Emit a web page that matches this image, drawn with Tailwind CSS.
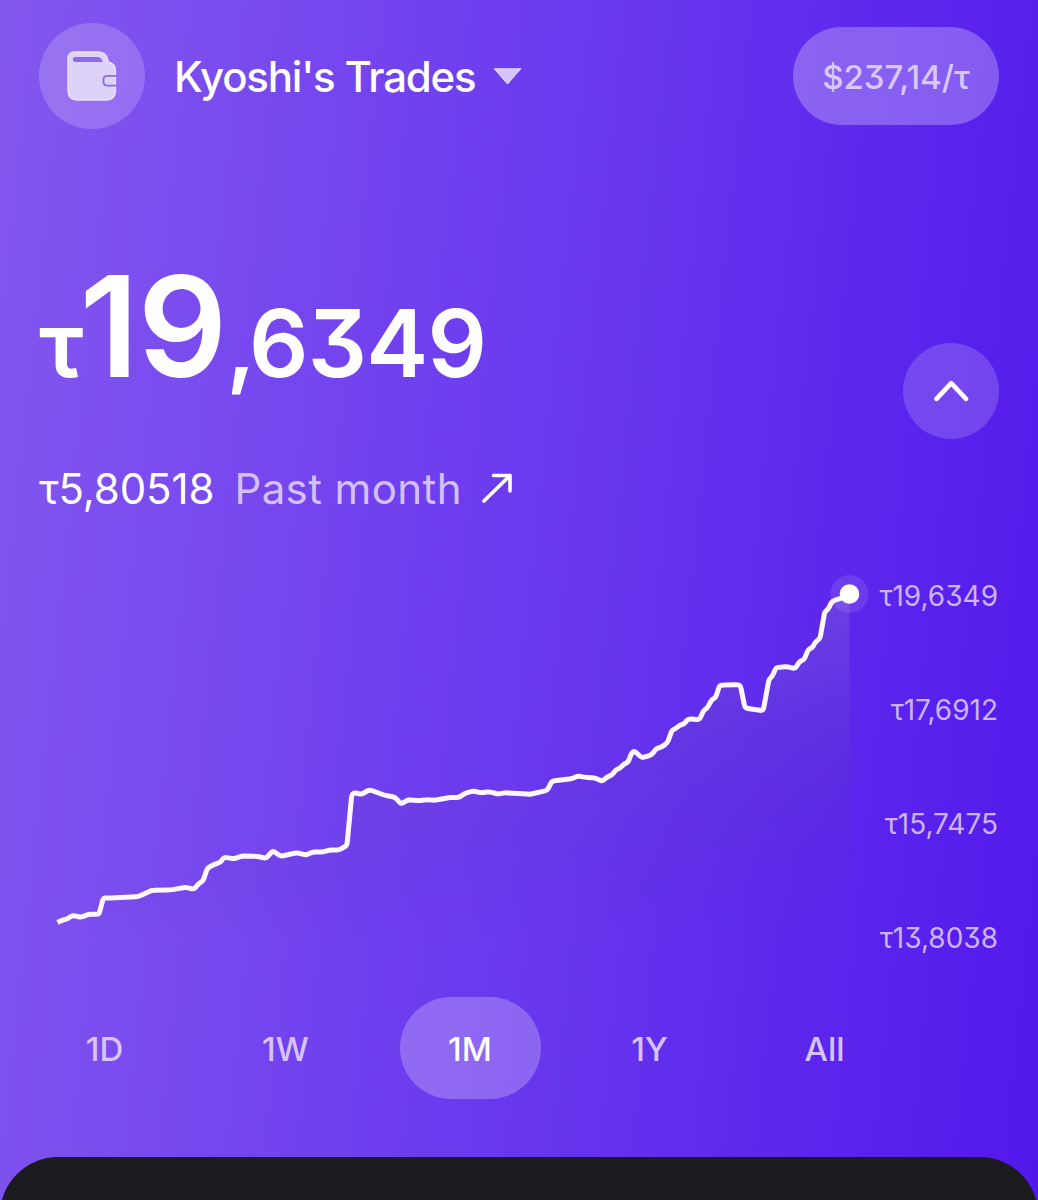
<!DOCTYPE html>
<html lang="en">
<head>
    <meta charset="UTF-8">
    <meta name="viewport" content="width=device-width, initial-scale=1.0">
    <title>Kyoshi's Trades</title>
    <script src="https://cdn.jsdelivr.net/npm/@tailwindcss/browser@4"></script>
</head>
<body class="font-['Inter',sans-serif] [font-feature-settings:'cv09'] text-white">
    <div class="flex h-[1200px] w-[1038px] flex-col overflow-hidden bg-[linear-gradient(96deg,#8457ee_0%,#6a38ee_52%,#5218eb_100%)]">

        <!-- Header -->
        <header class="mt-[23px] flex h-[106px] shrink-0 items-center px-[39px]">
            <div class="flex size-[106px] shrink-0 items-center justify-center rounded-full bg-white/18">
                <svg class="size-[50px]" viewBox="0 0 50 50" fill="none">
                    <path d="M8 1H31Q40 1 41.3 10.8Q48.5 12.5 48.5 20V39Q48.5 49 38.5 49H11Q1 49 1 39V8Q1 1 8 1Z" fill="#ddd2f8" stroke="#ede4fd" stroke-width="1.3"/>
                    <path d="M8.3 6H30Q34.5 6 35.8 10.9H8.3A2.4 2.4 0 0 1 8.3 6Z" fill="#8e69ea"/>
                    <path d="M50 24.8H40.5Q36.5 24.8 36.5 28.3V30.8Q36.5 34.6 40.5 34.6H50" stroke="#8e69ea" stroke-width="1.8"/>
                </svg>
            </div>
            <h1 class="ml-[29px] text-[42px] font-medium tracking-[-1.2px] whitespace-nowrap">Kyoshi's Trades</h1>
            <svg class="ml-[18px] h-[17px] w-[29px]" viewBox="0 0 29 17">
                <path d="M1.2 .8H27.8L14.5 16Z" fill="#d5c4f8" stroke="#eadffd" stroke-width="1"/>
            </svg>
            <div class="ml-auto flex h-[98px] w-[206px] items-center justify-center rounded-full bg-white/26 pt-[3px] text-[33px] font-medium text-[#d9c8fd]">$237,14/τ</div>
        </header>

        <!-- Balance -->
        <section class="flex h-[390px] shrink-0 justify-between px-[39px]">
            <div class="flex flex-col">
                <div class="mt-[112px] flex h-[170px] items-baseline font-semibold leading-[170px] whitespace-nowrap">
                    <span class="text-[90px] tracking-[-4px]">τ</span>
                    <span class="text-[140px] tracking-[-1px]">19</span>
                    <span class="text-[93px] tracking-[-7px]">,</span>
                    <span class="text-[93px] tracking-[-0.7px]">6349</span>
                </div>
                <div class="mt-[53px] flex items-center text-[42px] leading-[50px] whitespace-nowrap">
                    <span class="tracking-[-0.1px]">τ5,80518</span>
                    <span class="ml-[20px] tracking-[0.4px] text-[#d4c0fc]">Past month</span>
                    <svg class="ml-[19px] size-[32px]" viewBox="0 0 32 32" fill="none" stroke="white" stroke-width="3.6" stroke-linecap="round" stroke-linejoin="round">
                        <path d="M3 28L29 2.5M12.5 2.5H29V18"/>
                    </svg>
                </div>
            </div>
            <button class="mt-[214px] flex size-[96px] items-center justify-center rounded-full bg-white/17">
                <svg class="h-[22px] w-[36px]" viewBox="0 0 36 22" fill="none" stroke="white" stroke-width="4.6" stroke-linecap="round" stroke-linejoin="round">
                    <path d="M3.5 18.8L18.2 3.2L33 18.8"/>
                </svg>
            </button>
        </section>

        <!-- Chart -->
        <section class="flex h-[440px] shrink-0 justify-between pr-[40px]">
            <svg class="h-[440px] w-[872px] shrink-0" viewBox="0 519 872 440" fill="none">
                <defs>
                    <linearGradient id="area" gradientUnits="userSpaceOnUse" x1="0" y1="594" x2="0" y2="940">
                        <stop offset="0" stop-color="#9885d1" stop-opacity=".26"/>
                        <stop offset=".4" stop-color="#6a50b8" stop-opacity=".2"/>
                        <stop offset="1" stop-color="#4a28b0" stop-opacity="0"/>
                    </linearGradient>
                </defs>
                <path id="fill" fill="url(#area)"/>
                <circle cx="849.5" cy="594" r="19" fill="white" fill-opacity=".1"/>
                <path id="line" stroke="#fdf8ff" stroke-width="5" stroke-linejoin="round"/>
                <circle cx="849.5" cy="594" r="9.8" fill="white"/>
            </svg>
            <div class="flex flex-col items-end pt-[60px] text-[28px] leading-[34px] text-[#cbb4fb]">
                <span class="h-[114px]">τ19,6349</span>
                <span class="h-[114px]">τ17,6912</span>
                <span class="h-[114px]">τ15,7475</span>
                <span>τ13,8038</span>
            </div>
        </section>

        <!-- Range tabs -->
        <nav class="mt-[38px] grid h-[102px] shrink-0 grid-cols-[181px_181px_188px_171px_179px] items-center justify-items-center pl-[14px] text-[33px] font-medium text-[#d6c4fd]">
            <span class="pt-[3px]">1D</span>
            <span class="pt-[3px]">1W</span>
            <span class="flex h-[102px] w-[141px] items-center justify-center rounded-full bg-white/24 pt-[3px] text-white">1M</span>
            <span class="pt-[3px]">1Y</span>
            <span class="pt-[3px]">All</span>
        </nav>

        <div class="mt-[58px] h-[100px] shrink-0 rounded-t-[58px] bg-[#1c1b20]"></div>
    </div>

    <script>
        const points = [
            [57.5,922.5],[62.7,920],[67.3,919],[72.3,915.3],[81,917.3],[88.3,914.3],[99,914.3],[103.3,898],[108,898],[138.3,896.7],
            [151.7,890.3],[170,890],[185.7,887.3],[194,889.3],[199.3,883],[203,881],[207.3,868.3],[214,864.3],[220,862.7],[224,857.3],
            [234.3,858.7],[241.7,856],[256.7,856.3],[266,858.3],[273,850.7],[280.7,856.3],[296.7,852.7],[306,855],[312.7,852],[323.3,852],
            [329.3,850],[339.3,850],[347,845.3],[351.7,795],[354,792.7],[361.7,794.3],[369.3,789.7],[385,795.3],[395,797.3],[401.3,804],
            [408,799.7],[420,800.7],[426.7,799.7],[435,800.3],[448.3,797.7],[459.3,797.3],[465,793.3],[473.3,791],[481,792.7],[489.3,791.7],
            [497.7,794],[505.7,792.7],[530,794.3],[547.3,790.3],[552,781],[571.7,778.7],[577.7,776],[585,777.3],[595,778],[602.3,781.3],
            [607.3,776.7],[611.7,775.3],[616,769.7],[619.3,768.7],[624.3,764],[628,762.3],[631.7,752.7],[634.3,751],[641.7,757.7],[651,755.3],
            [656.7,748.3],[661,747.3],[667.3,743],[672,730.3],[675,729],[680,725],[684,724],[688.3,718.7],[699.3,719.7],[704,710],
            [707,708.3],[712,699.3],[715.7,697.7],[719.3,686],[721.7,685],[739,684.7],[740.7,686.7],[744.7,706.7],[746.7,708.3],[762.7,710.7],
            [764,706.7],[769,679],[772,676.7],[776,667.7],[780,667],[787.7,666.7],[795,668.7],[800,661],[804,660],[808.3,649.3],
            [812,648],[816,641.3],[820,638.7],[824.7,611.7],[828,609.3],[832.3,601],[839,599],[849.5,594]
        ];

        // round each corner a little by curving through it
        let d = 'M' + points[0].join(' ');
        for (let i = 1; i < points.length - 1; i++) {
            const [px, py] = points[i - 1];
            const [x, y] = points[i];
            const [nx, ny] = points[i + 1];
            const cut = (ax, ay) => {
                const len = Math.hypot(ax - x, ay - y);
                const t = Math.min(2.5, len / 2) / len;
                return (x + (ax - x) * t).toFixed(1) + ' ' + (y + (ay - y) * t).toFixed(1);
            };
            d += 'L' + cut(px, py) + 'Q' + x + ' ' + y + ' ' + cut(nx, ny);
        }
        d += 'L849.5 594';

        document.getElementById('line').setAttribute('d', d);
        document.getElementById('fill').setAttribute('d', d + 'V940H57.5Z');
    </script>
</body>
</html>
